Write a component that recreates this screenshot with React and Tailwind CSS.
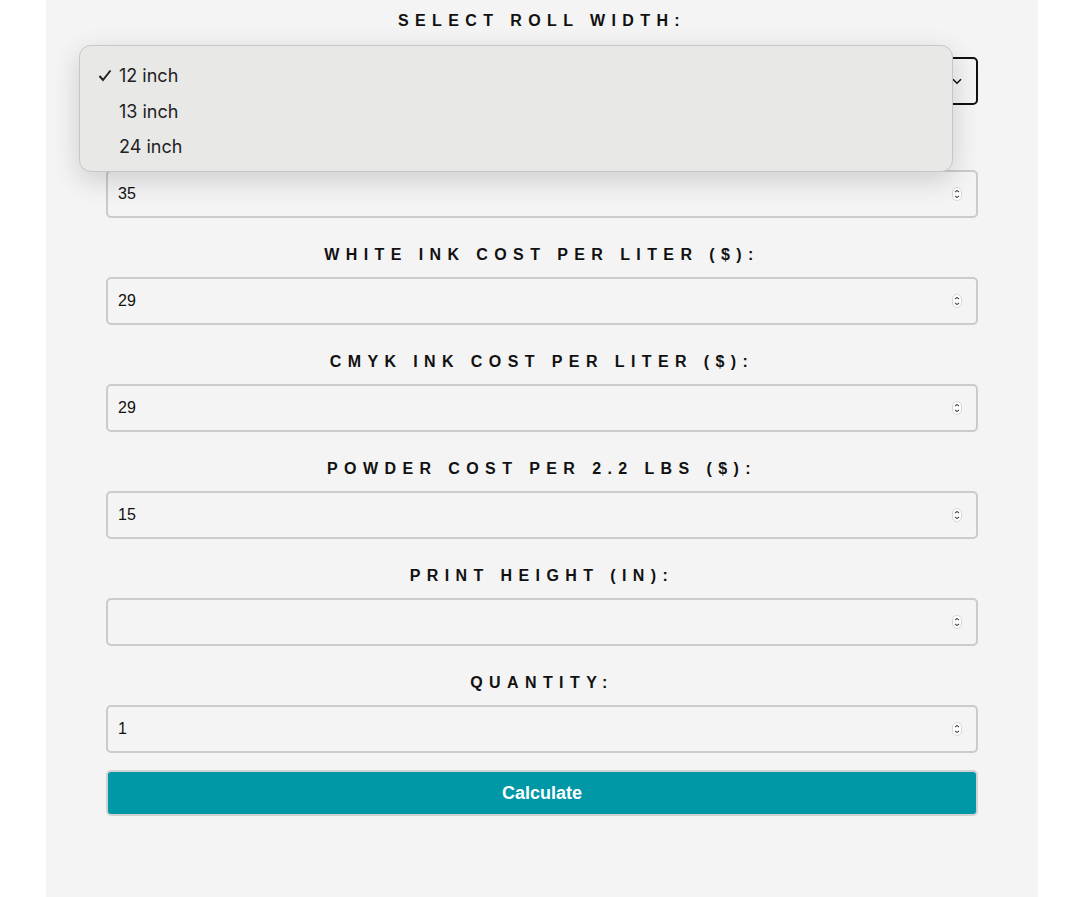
import React from "react";

const labelCls =
  "block text-center text-[16px] leading-[20px] font-bold tracking-[0.4em] text-[#111]";

const Spinner = () => (
  <svg width="10" height="14" viewBox="0 0 10 14" className="shrink-0">
    <rect x="0.5" y="0.5" width="9" height="13" rx="4.5" fill="#fff" stroke="#d6d6d6" />
    <path d="M3 5.2 L5 3.4 L7 5.2" fill="none" stroke="#444" strokeWidth="1.1" />
    <path d="M3 8.8 L5 10.6 L7 8.8" fill="none" stroke="#444" strokeWidth="1.1" />
  </svg>
);

const NumberField = ({ value }) => (
  <div className="flex h-[48px] items-center justify-between rounded-[5px] border-2 border-[#cbcbcb] bg-[#f4f4f4] pl-[10px] pr-[14px]">
    <span className="text-[16px] text-[#111]">{value}</span>
    <Spinner />
  </div>
);

const fields = [
  { label: "WHITE INK COST PER LITER ($):", value: "29" },
  { label: "CMYK INK COST PER LITER ($):", value: "29" },
  { label: "POWDER COST PER 2.2 LBS ($):", value: "15" },
  { label: "PRINT HEIGHT (IN):", value: "" },
  { label: "QUANTITY:", value: "1" },
];

export default function App() {
  return (
    <div
      className="relative h-[897px] w-[1080px] overflow-hidden bg-white"
      style={{ fontFamily: '"Liberation Sans", Arial, sans-serif' }}
    >
      <div className="ml-[46px] h-full w-[992px] bg-[#f4f4f4] px-[60px] pt-[11px]">
        <label className={labelCls}>SELECT ROLL WIDTH:</label>
        <div className="mt-[26px] flex h-[48px] items-center justify-between rounded-[5px] border-2 border-[#111] bg-[#f4f4f4] pl-[10px] pr-[14px]">
          <span className="text-[16px] text-[#111]">12 inch</span>
          <svg width="10" height="7" viewBox="0 0 10 7">
            <path d="M1 1.2 L5 5.2 L9 1.2" fill="none" stroke="#111" strokeWidth="1.5" />
          </svg>
        </div>

        <label className={`${labelCls} mt-[33px]`}>ROLL COST PER METER ($):</label>
        <div className="mt-[12px]">
          <NumberField value="35" />
        </div>

        {fields.map((f) => (
          <div key={f.label}>
            <label className={`${labelCls} mt-[27px]`}>{f.label}</label>
            <div className="mt-[12px]">
              <NumberField value={f.value} />
            </div>
          </div>
        ))}

        <button className="mt-[17px] flex h-[46px] w-full items-center justify-center rounded-[5px] border-2 border-[#d2d2d2] bg-[#0097a7] pt-[1px] text-[18px] font-bold text-white">
          Calculate
        </button>
      </div>

      {/* open native select popup */}
      <div
        className="absolute left-[79px] top-[45px] h-[127px] w-[874px] rounded-[12px] border border-[#c6c6c6] bg-[#e8e8e7] pt-[12px] shadow-[0_8px_28px_rgba(0,0,0,0.16)]"
        style={{ fontFamily: "Inter, sans-serif" }}
      >
        {["12 inch", "13 inch", "24 inch"].map((opt, i) => (
          <div key={opt} className="flex h-[35.5px] items-center pl-[18px] text-[18px] text-[#222]">
            <span className="flex w-[21px] items-center">
              {i === 0 && (
                <svg width="14" height="13" viewBox="0 0 14 13">
                  <path d="M1.5 7 L5 11 L12.5 1.5" fill="none" stroke="#222" strokeWidth="2" />
                </svg>
              )}
            </span>
            {opt}
          </div>
        ))}
      </div>
    </div>
  );
}
